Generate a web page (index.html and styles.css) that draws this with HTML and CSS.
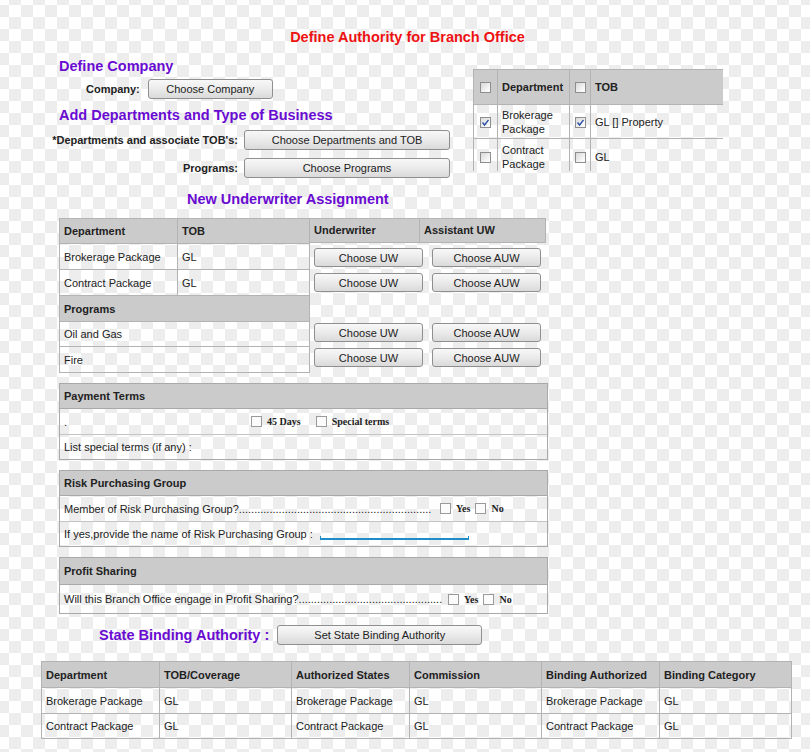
FILE: index.html
```html
<!DOCTYPE html>
<html>
<head>
<meta charset="utf-8">
<title>Define Authority for Branch Office</title>
<link rel="stylesheet" href="styles.css">
</head>
<body>
<div class="page">
  <h1 class="title">Define Authority for Branch Office</h1>

  <div class="top">
    <div class="left">
      <h2 class="sec">Define Company</h2>
      <div class="row-company">
        <span class="lbl">Company:</span>
        <button class="btn btn-company">Choose Company</button>
      </div>
      <h2 class="sec sec2">Add Departments and Type of Business</h2>
      <div class="grid-form">
        <span class="lbl">*Departments and associate TOB's:</span>
        <button class="btn">Choose Departments and TOB</button>
        <span class="lbl">Programs:</span>
        <button class="btn">Choose Programs</button>
      </div>
    </div>

    <div class="picker">
      <table class="picker-table">
        <colgroup><col class="c-cb1"><col class="c-dep"><col class="c-cb2"><col class="c-tob"></colgroup>
        <thead>
          <tr><th class="cbcell"><span class="cb"></span></th><th>Department</th><th class="cbcell"><span class="cb"></span></th><th>TOB</th></tr>
        </thead>
        <tbody>
          <tr>
            <td class="cbcell"><span class="cb on"><svg viewBox="0 0 9 9" width="9" height="9"><path d="M1.5 4.5 L3.6 7 L7.5 1.8" fill="none" stroke="#2c4fa6" stroke-width="1.4"/></svg></span></td>
            <td class="two">Brokerage<br>Package</td>
            <td class="cbcell"><span class="cb on"><svg viewBox="0 0 9 9" width="9" height="9"><path d="M1.5 4.5 L3.6 7 L7.5 1.8" fill="none" stroke="#2c4fa6" stroke-width="1.4"/></svg></span></td>
            <td>GL [] Property</td>
          </tr>
          <tr class="last">
            <td class="cbcell"><span class="cb"></span></td>
            <td class="two">Contract<br>Package</td>
            <td class="cbcell"><span class="cb"></span></td>
            <td>GL</td>
          </tr>
        </tbody>
      </table>
    </div>
  </div>

  <h2 class="sec uw-title">New Underwriter Assignment</h2>

  <div class="uw">
    <table class="grid uw-table">
      <colgroup><col class="c118"><col></colgroup>
      <tr class="h25"><th>Department</th><th>TOB</th></tr>
      <tr class="h26"><td>Brokerage Package</td><td>GL</td></tr>
      <tr class="h26"><td>Contract Package</td><td>GL</td></tr>
      <tr class="h26"><th colspan="2">Programs</th></tr>
      <tr class="h25"><td colspan="2">Oil and Gas</td></tr>
      <tr class="h26"><td colspan="2">Fire</td></tr>
    </table>
    <div class="uw-right">
      <div class="uw-head"><div class="uw-h1">Underwriter</div><div class="uw-h2">Assistant UW</div></div>
      <div class="uw-btns b1"><button class="btn">Choose UW</button><button class="btn">Choose AUW</button></div>
      <div class="uw-btns b2"><button class="btn">Choose UW</button><button class="btn">Choose AUW</button></div>
      <div class="uw-btns b3"><button class="btn">Choose UW</button><button class="btn">Choose AUW</button></div>
      <div class="uw-btns b2"><button class="btn">Choose UW</button><button class="btn">Choose AUW</button></div>
    </div>
  </div>

  <div class="box">
    <div class="box-h">Payment Terms</div>
    <div class="box-r">
      <span class="pt-dot">.</span>
      <span class="cb plain"></span><span class="opt">45 Days</span>
      <span class="cb plain gap15"></span><span class="opt">Special terms</span>
    </div>
    <div class="box-r">List special terms (if any) :</div>
  </div>

  <div class="box">
    <div class="box-h">Risk Purchasing Group</div>
    <div class="box-r">
      <span class="lead lead-risk">Member of Risk Purchasing Group?...............................................................</span>
      <span class="cb plain ml2"></span><span class="opt">Yes</span>
      <span class="cb plain"></span><span class="opt">No</span>
    </div>
    <div class="box-r">
      <span>If yes,provide the name of Risk Purchasing Group :</span>
      <span class="rp-input"></span>
    </div>
  </div>

  <div class="box">
    <div class="box-h tall">Profit Sharing</div>
    <div class="box-r tall">
      <span class="lead lead-profit">Will this Branch Office engage in Profit Sharing?...............................................</span>
      <span class="cb plain ml1"></span><span class="opt">Yes</span>
      <span class="cb plain"></span><span class="opt">No</span>
    </div>
  </div>

  <div class="sb">
    <span class="sec">State Binding Authority :</span>
    <button class="btn btn-sb">Set State Binding Authority</button>
  </div>

  <table class="grid bottom-table">
    <colgroup><col class="c118"><col class="c132"><col class="c118"><col class="c132"><col class="c118"><col></colgroup>
    <tr class="h26"><th>Department</th><th>TOB/Coverage</th><th>Authorized States</th><th>Commission</th><th>Binding Authorized</th><th>Binding Category</th></tr>
    <tr class="h26"><td>Brokerage Package</td><td>GL</td><td>Brokerage Package</td><td>GL</td><td>Brokerage Package</td><td>GL</td></tr>
    <tr class="h25"><td>Contract Package</td><td>GL</td><td>Contract Package</td><td>GL</td><td>Contract Package</td><td>GL</td></tr>
  </table>
</div>
</body>
</html>
```

FILE: styles.css
```css
* { box-sizing: border-box; }

html, body { margin: 0; padding: 0; }

body {
  width: 810px;
  min-height: 752px;
  font-family: "Liberation Sans", Arial, sans-serif;
  font-size: 11px;
  color: #222;
  background-color: #ffffff;
  background-image: conic-gradient(#ededed 25%, #ffffff 0 50%, #ededed 0 75%, #ffffff 0);
  background-size: 24px 24px;
  background-position: -3px -7px;
}

.page { padding-top: 28px; }

.title {
  margin: 0;
  padding-left: 5px;
  text-align: center;
  color: #ee1111;
  font-size: 14.5px;
  line-height: 18px;
  font-weight: bold;
}

.sec {
  margin: 0;
  color: #6a0bd2;
  font-size: 14.5px;
  line-height: 18px;
  font-weight: bold;
}

.top {
  display: flex;
  align-items: flex-start;
  margin-top: 11px;
}

.left { width: 473px; }
.left .sec { margin-left: 59px; }
.left .sec2 { margin-top: 7px; }

.lbl { font-weight: bold; color: #222; }

.row-company {
  display: flex;
  align-items: center;
  gap: 8px;
  height: 20px;
  margin: 4px 0 0 86px;
}

.grid-form {
  display: grid;
  grid-template-columns: 190px 206px;
  column-gap: 6px;
  row-gap: 8px;
  align-items: center;
  margin: 6px 0 0 48px;
}
.grid-form .lbl { text-align: right; }

.btn {
  font-family: "Liberation Sans", Arial, sans-serif;
  font-size: 11px;
  color: #222;
  height: 20px;
  padding: 0;
  border: 1px solid #8f8f8f;
  border-radius: 3px;
  background: linear-gradient(#f8f8f8, #ececec 45%, #dadada);
}
.grid-form .btn { width: 206px; }
.btn-company { width: 125px; }

/* top right picker */
.picker {
  margin-top: 12px;
  width: 250px;
  height: 102px;
  overflow: hidden;
}
.picker-table {
  border-collapse: collapse;
  table-layout: fixed;
  width: 250px;
}
.c-cb1 { width: 24px; }
.c-dep { width: 72px; }
.c-cb2 { width: 21px; }
.c-tob { width: 133px; }
.picker-table th,
.picker-table td {
  border: 1px solid #b3b3b3;
  padding: 0 0 0 4px;
  text-align: left;
  font-size: 11px;
}
.picker-table th {
  height: 35px;
  background: #cbcbcb;
  font-weight: bold;
}
.picker-table td {
  height: 34px;
  line-height: 14px;
}
.picker-table .last td { height: 36px; }
.picker-table .cbcell { padding: 0; text-align: center; }

.cb {
  display: inline-block;
  flex: none;
  width: 11px;
  height: 11px;
  border: 1px solid #8e8e8e;
  background: linear-gradient(135deg, #d8d8d8, #f6f6f6 70%, #ffffff);
  vertical-align: middle;
  position: relative;
}
.cb svg { position: absolute; left: 0; top: 0; }
.cb.plain {
  border-color: #9a9a9a;
  background: #fbfbfb;
}

/* underwriter assignment */
.uw-title { margin: 12px 0 0 187px; }

.uw {
  display: flex;
  align-items: flex-start;
  margin: 10px 0 0 59px;
}

.grid {
  border-collapse: collapse;
  table-layout: fixed;
}
.grid th,
.grid td {
  border: 1px solid #b3b3b3;
  padding: 0 0 0 4px;
  text-align: left;
  font-size: 11px;
  white-space: nowrap;
}
.grid th {
  background: #cbcbcb;
  font-weight: bold;
  color: #222;
}
.c118 { width: 118px; }
.c132 { width: 132px; }
.h25 { height: 25px; }
.h26 { height: 26px; }

.uw-table { width: 251px; }

.uw-right { width: 236px; }
.uw-head {
  display: flex;
  height: 25px;
  background: #cbcbcb;
  border: 1px solid #b3b3b3;
  border-left: none;
  font-weight: bold;
}
.uw-h1 { width: 110px; border-right: 1px solid #b3b3b3; padding-left: 4px; line-height: 23px; }
.uw-h2 { flex: 1; padding-left: 4px; line-height: 23px; }

.uw-btns {
  display: flex;
  gap: 9px;
  padding-left: 4px;
}
.uw-btns .btn { width: 109px; height: 19px; }
.b1 { margin-top: 5px; }
.b2 { margin-top: 6px; }
.b3 { margin-top: 31px; }

/* boxes */
.box {
  width: 489px;
  margin: 10px 0 0 59px;
  border: 1px solid #a9a9a9;
}
.box-h {
  display: flex;
  align-items: center;
  height: 25px;
  padding-left: 4px;
  background: #cbcbcb;
  font-weight: bold;
  border-bottom: 1px solid #a9a9a9;
}
.box-r {
  display: flex;
  align-items: center;
  height: 25px;
  padding-left: 4px;
  white-space: nowrap;
}
.box-r + .box-r { border-top: 1px solid #c4c4c4; }
.box-h.tall { height: 27px; }
.box-r.tall { height: 28px; }

.pt-dot { width: 187px; }
.opt {
  font-family: "Liberation Serif", "Times New Roman", serif;
  font-weight: bold;
  font-size: 10px;
  line-height: 11px;
  margin: 0 5px 0 5px;
  color: #222;
}
.gap15 { margin-left: 10px; }

.lead {
  flex: none;
  white-space: nowrap;
}
.lead-risk { width: 374px; }
.lead-profit { width: 383px; }
.ml2 { margin-left: 2px; }
.ml1 { margin-left: 1px; }

.rp-input {
  align-self: flex-end;
  width: 149px;
  height: 4px;
  margin: 0 0 6px 7px;
  border: 1px solid #1f8ec8;
  border-top: none;
  border-bottom-width: 2px;
}

/* state binding */
.sb {
  display: flex;
  align-items: center;
  gap: 8px;
  margin: 11px 0 0 99px;
}
.btn-sb { width: 205px; }

.bottom-table {
  width: 751px;
  margin: 16px 0 0 41px;
}
```
